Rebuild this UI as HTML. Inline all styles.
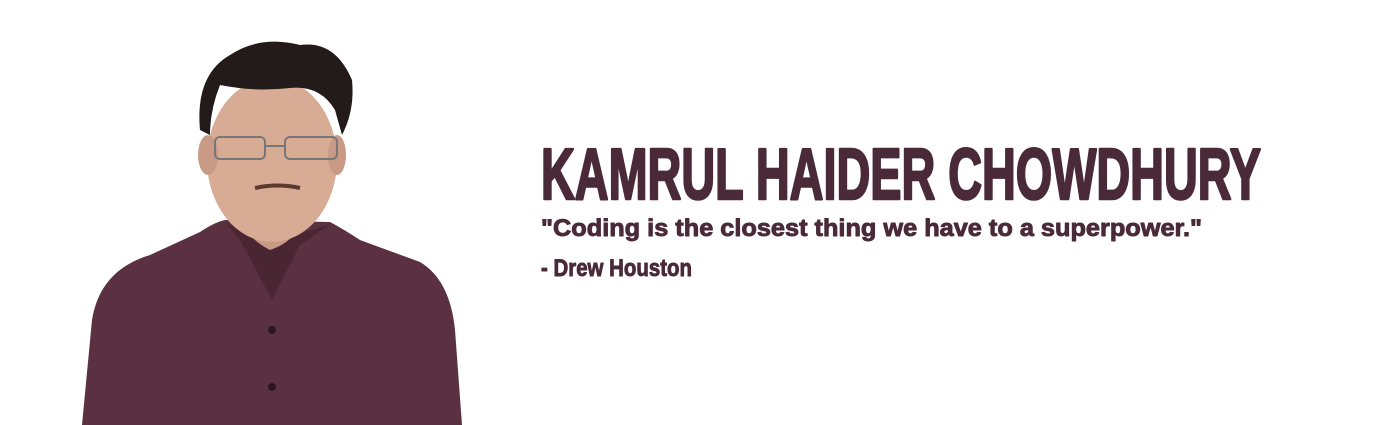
<!DOCTYPE html>
<html><head><style>
html,body{margin:0;padding:0;background:#fff;width:1400px;height:425px;overflow:hidden}
</style></head><body>
<svg width="1400" height="425" viewBox="0 0 1400 425" xmlns="http://www.w3.org/2000/svg">
<rect width="1400" height="425" fill="#fff"/>
<path d="M82 425 L92 320 Q100 270 150 255 L200 232 Q215 222 225 220 L330 222 Q345 230 360 240 L420 262 Q450 280 455 330 L462 425 Z" fill="#5b3040"/>
<path d="M225 222 L240 240 L272 300 L300 245 L330 224 Q300 235 275 238 Q245 235 225 222Z" fill="#4a2633"/>
<path d="M238 205 Q240 235 270 250 Q300 240 305 210 Z" fill="#c99a86"/>
<ellipse cx="272" cy="160" rx="65" ry="82" fill="#d8ab95"/>
<ellipse cx="208" cy="155" rx="10" ry="20" fill="#c99a86"/>
<ellipse cx="337" cy="155" rx="9" ry="20" fill="#c99a86"/>
<path d="M200 130 Q195 75 230 55 Q260 35 300 45 Q335 40 352 80 Q355 110 342 135 L335 110 Q320 85 290 88 Q255 92 220 85 Q210 110 210 135 Z" fill="#231a1a"/>
<rect x="215" y="137" width="50" height="22" rx="5" fill="none" stroke="#777" stroke-width="2"/>
<rect x="285" y="137" width="52" height="22" rx="5" fill="none" stroke="#777" stroke-width="2"/>
<path d="M265 146 L285 146" stroke="#777" stroke-width="2"/>
<path d="M255 188 Q278 183 300 188" stroke="#5a3a30" stroke-width="4" fill="none"/>
<circle cx="272" cy="330" r="4" fill="#2a1820"/><circle cx="272" cy="387" r="4" fill="#2a1820"/>
<g font-family="Liberation Sans, sans-serif" font-weight="bold" fill="#4a2a38" stroke="#4a2a38" stroke-linejoin="round">
<text x="541" y="199" font-size="72" stroke-width="2.5" textLength="720" lengthAdjust="spacingAndGlyphs">KAMRUL HAIDER CHOWDHURY</text>
<text x="541" y="236" font-size="24" stroke-width="0.9" textLength="661" lengthAdjust="spacingAndGlyphs">"Coding is the closest thing we have to a superpower."</text>
<text x="541" y="276" font-size="24" stroke-width="0.9" textLength="151" lengthAdjust="spacingAndGlyphs">- Drew Houston</text>
</g>
</svg>
</body></html>
